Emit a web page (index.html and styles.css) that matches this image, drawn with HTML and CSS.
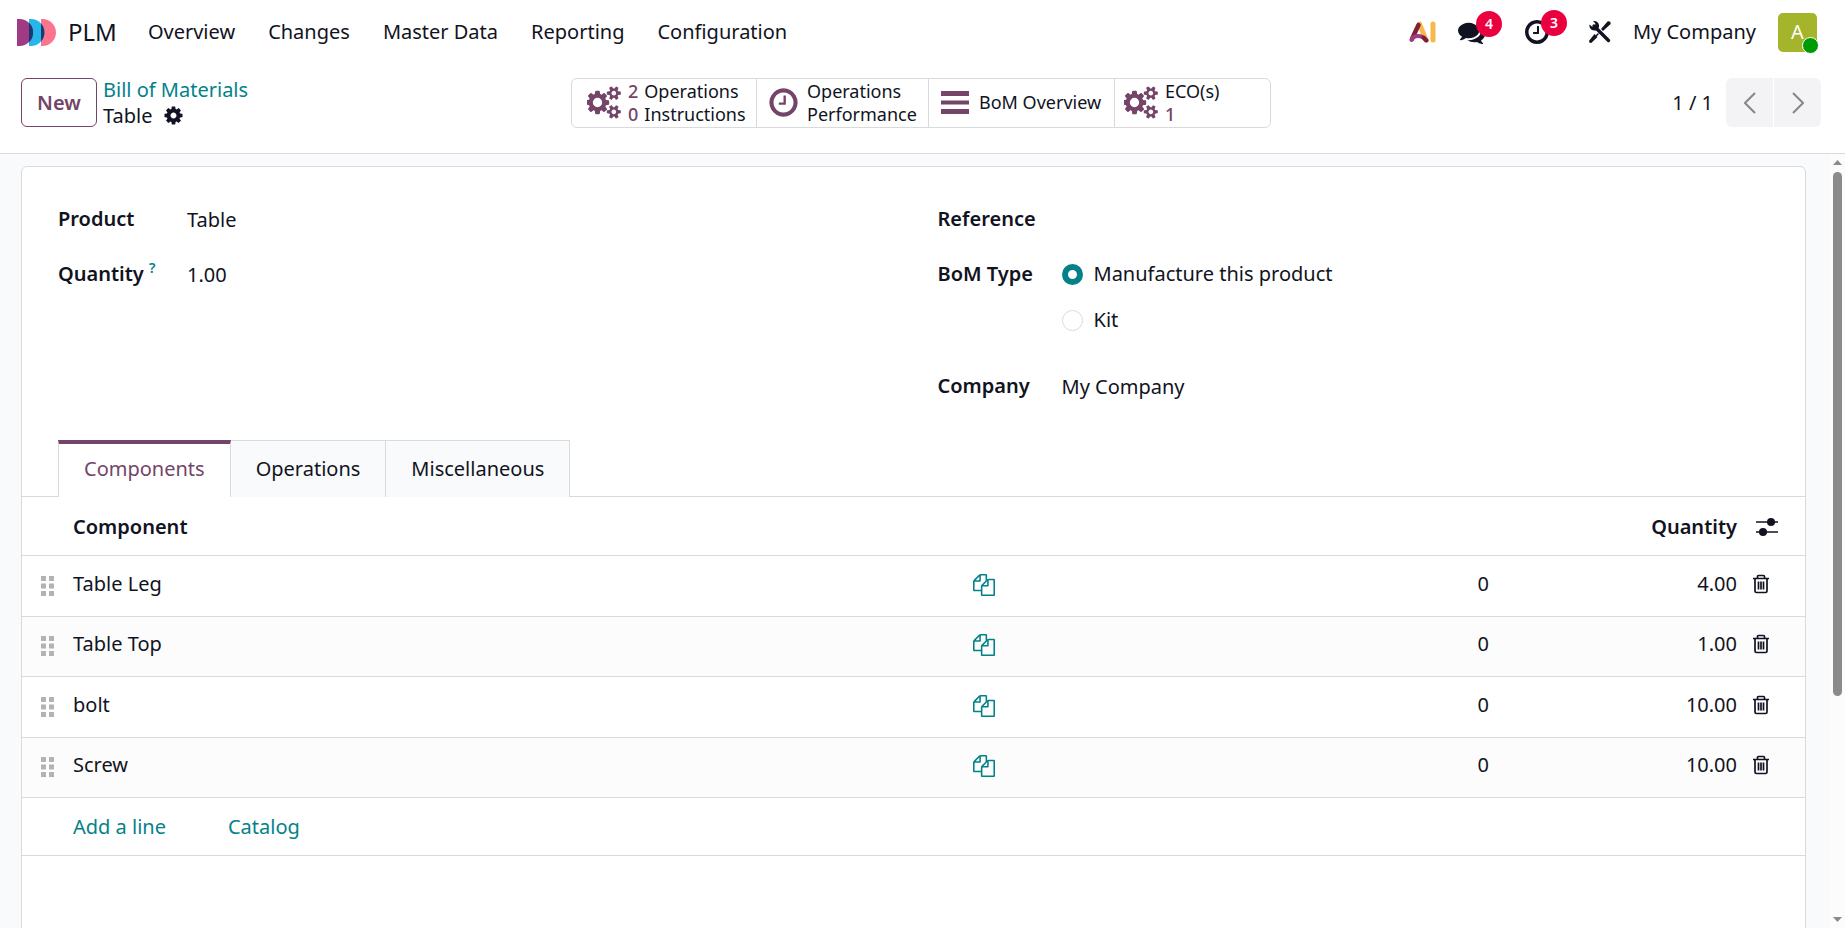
FILE: index.html
```html
<!DOCTYPE html>
<html lang="en">
<head>
    <meta charset="UTF-8">
    <meta name="viewport" content="width=device-width, initial-scale=1.0">
    <title>Table - Bill of Materials</title>
    <link rel="stylesheet" href="styles.css">
</head>
<body>

<!-- Shared icons -->
<svg class="sprite" aria-hidden="true">
    <symbol id="i-cog" viewBox="0 0 1792 1792"><path d="M1152 896q0-106-75-181t-181-75-181 75-75 181 75 181 181 75 181-75 75-181zm512-109v222q0 12-8 23t-20 13l-185 28q-19 54-39 91 35 50 107 138 10 12 10 25t-9 23q-27 37-99 108t-94 71q-12 0-26-9l-138-108q-44 23-91 38-16 136-29 186-7 28-36 28h-222q-14 0-24.5-8.5t-11.5-21.5l-28-184q-49-16-90-37l-141 107q-10 9-25 9-14 0-25-11-126-114-165-168-7-10-7-23 0-12 8-23 15-21 51-66.5t54-70.5q-27-50-41-99l-183-27q-13-2-21-12.5t-8-23.5v-222q0-12 8-23t19-13l186-28q14-46 39-92-40-57-107-138-10-12-10-24 0-10 9-23 26-36 98.5-107.5t94.5-71.5q13 0 26 10l138 107q44-23 91-38 16-136 29-186 7-28 36-28h222q14 0 24.5 8.5t11.5 21.5l28 184q49 16 90 37l142-107q9-9 24-9 13 0 25 10 129 119 165 170 7 8 7 22 0 12-8 23-15 21-51 66.5t-54 70.5q26 50 41 98l183 28q13 2 21 12.5t8 23.5z"/></symbol>
    <symbol id="i-cogs" viewBox="0 0 1920 1792"><path d="M832 896q0-106-75-181t-181-75-181 75-75 181 75 181 181 75 181-75 75-181zm768 512q0-52-38-90t-90-38-90 38-38 90q0 53 37.5 90.5t90.5 37.5 90.5-37.5 37.5-90.5zm0-1024q0-52-38-90t-90-38-90 38-38 90q0 53 37.5 90.5t90.5 37.5 90.5-37.5 37.5-90.5zm-384 421v185q0 10-7 19.5t-16 10.5l-155 24q-11 35-32 76 34 48 90 115 7 11 7 20 0 12-7 19-23 30-82.5 89.5t-78.5 59.5q-11 0-21-7l-115-90q-37 19-77 31-11 108-23 155-7 24-30 24h-186q-11 0-20-7.5t-10-17.5l-23-153q-34-10-75-31l-118 89q-7 7-20 7-11 0-21-8-144-133-144-160 0-9 7-19 10-14 41-53t47-61q-23-44-35-82l-152-24q-10-1-17-9.5t-7-19.5v-185q0-10 7-19.5t16-10.5l155-24q11-35 32-76-34-48-90-115-7-11-7-20 0-12 7-20 22-30 82-89t79-59q11 0 21 7l115 90q34-18 77-32 11-108 23-154 7-24 30-24h186q11 0 20 7.5t10 17.5l23 153q34 10 75 31l118-89q8-7 20-7 11 0 21 8 144 133 144 160 0 8-7 19-12 16-42 54t-45 60q23 48 34 82l152 23q10 2 17 10.5t7 19.5zm640 533v140q0 16-149 31-12 27-30 52 51 113 51 138 0 4-4 7-122 71-124 71-8 0-46-47t-52-68q-20 2-30 2t-30-2q-14 21-52 68t-46 47q-2 0-124-71-4-3-4-7 0-25 51-138-18-25-30-52-149-15-149-31v-140q0-16 149-31 13-29 30-52-51-113-51-138 0-4 4-7 4-2 35-20t59-34 30-16q8 0 46 46.5t52 67.5q20-2 30-2t30 2q51-71 92-112l6-2q4 0 124 70 4 3 4 7 0 25-51 138 17 23 30 52 149 15 149 31zm0-1024v140q0 16-149 31-12 27-30 52 51 113 51 138 0 4-4 7-122 71-124 71-8 0-46-47t-52-68q-20 2-30 2t-30-2q-14 21-52 68t-46 47q-2 0-124-71-4-3-4-7 0-25 51-138-18-25-30-52-149-15-149-31v-140q0-16 149-31 13-29 30-52-51-113-51-138 0-4 4-7 4-2 35-20t59-34 30-16q8 0 46 46.5t52 67.5q20-2 30-2t30 2q51-71 92-112l6-2q4 0 124 70 4 3 4 7 0 25-51 138 17 23 30 52 149 15 149 31z"/></symbol>
    <symbol id="i-clock" viewBox="0 0 1792 1792"><path d="M1024 544v448q0 14-9 23t-23 9h-320q-14 0-23-9t-9-23v-64q0-14 9-23t23-9h224v-352q0-14 9-23t23-9h64q14 0 23 9t9 23zm416 352q0-148-73-273t-198-198-273-73-273 73-198 198-73 273 73 273 198 198 273 73 273-73 198-198 73-273zm224 0q0 209-103 385.5t-279.5 279.5-385.5 103-385.5-103-279.5-279.5-103-385.5 103-385.5 279.5-279.5 385.5-103 385.5 103 279.5 279.5 103 385.5z"/></symbol>
    <symbol id="i-comments" viewBox="0 0 1792 1792"><path d="M1408 768q0 139-94 257t-256.5 186.5-353.5 68.5q-86 0-176-16-124 88-278 128-36 9-86 16h-3q-11 0-20.5-8t-11.5-21q-1-3-1-6.5t.5-6.5 2-6l2.5-5 3.5-5.5 4-5 4.5-5 4-4.500q5-6 23-25t26-29.5 22.5-29 25-38.5 20.5-44q-124-72-195-177t-71-224q0-139 94-257t256.5-186.5 353.5-68.5 353.5 68.5 256.5 186.5 94 257zm384 256q0 120-71 224.5t-195 176.5q10 24 20.5 44t25 38.5 22.5 29 26 29.5 23 25q1 1 4 4.500t4.500 5 4 5 3.500 5.500l2.500 5 2 6 .5 6.500-1 6.500q-3 14-13 22t-22 7q-50-7-86-16-154-40-278-128-90 16-176 16-271 0-472-132 58 4 88 4 161 0 309-45t264-129q125-92 192-212t67-254q0-77-23-152 129 71 204 178t75 230z"/></symbol>
    <symbol id="i-copy" viewBox="0 0 1792 1792"><path d="M1696 384q40 0 68 28t28 68v1216q0 40-28 68t-68 28h-960q-40 0-68-28t-28-68v-288h-544q-40 0-68-28t-28-68v-672q0-40 20-88t48-76l408-408q28-28 76-48t88-20h416q40 0 68 28t28 68v328q68-40 128-40h416zm-544 213l-299 299h299v-299zm-640-384l-299 299h299v-299zm196 647l316-316v-416h-384v416q0 40-28 68t-68 28h-416v640h512v-256q0-40 20-88t48-76zm956 804v-1152h-384v416q0 40-28 68t-68 28h-416v640h896z"/></symbol>
    <symbol id="i-trash" viewBox="0 0 18 20"><path d="M1 4.500h16M5.500 4V2.500q0-1 1-1h5q1 0 1 1V4M3 5v12q0 1.500 1.500 1.500h9q1.500 0 1.500-1.500V5M6.500 7.500v8M9 7.500v8M11.500 7.500v8" fill="none" stroke="currentColor" stroke-width="1.700"/></symbol>
    <symbol id="i-handle" viewBox="0 0 13 20"><path d="M0 0h5v5H0zM8 0h5v5H8zM0 7.500h5v5H0zM8 7.500h5v5H8zM0 15h5v5H0zM8 15h5v5H8z"/></symbol>
</svg>

<header class="navbar">
    <a class="brand" href="#">
        <svg width="39" height="27" viewBox="0 0 39 27" aria-hidden="true">
            <path d="M24 0h1.500a13.500 13.500 0 0 1 0 27H24z" fill="#fc748d"/>
            <path d="M12 0h2a13.500 13.500 0 0 1 0 27h-2z" fill="#27b5ea"/>
            <path d="M0 0h2.500a13.500 13.500 0 0 1 0 27H0z" fill="#a13a84"/>
            <path d="M12 3.800a13.500 13.500 0 0 1 0 19.400zM24 4.500a13.500 13.500 0 0 1 0 18z" fill="#1d3770"/>
        </svg>
        <span>PLM</span>
    </a>
    <nav class="menu">
        <a href="#">Overview</a>
        <a href="#">Changes</a>
        <a href="#">Master Data</a>
        <a href="#">Reporting</a>
        <a href="#">Configuration</a>
    </nav>
    <div class="systray">
        <button class="tray-btn" aria-label="AI">
            <svg width="27" height="22" viewBox="0 0 27 22" fill="none" stroke-linecap="round" aria-hidden="true">
                <path d="M10.500 3L17 19" stroke="#f7b84b" stroke-width="5"/>
                <path d="M9.500 4L3 18" stroke="#7d2038" stroke-width="4.500"/>
                <path d="M2.500 19Q4 15 9 15t7.500 4" fill="none" stroke="#a13a84" stroke-width="4"/>
                <path d="M14.500 16.500l3 3" stroke="#7d2038" stroke-width="4"/>
                <path d="M24 3v16" stroke="#f7b84b" stroke-width="5"/>
            </svg>
        </button>
        <button class="tray-btn" aria-label="Messages">
            <svg width="27" height="27" aria-hidden="true"><use href="#i-comments"/></svg>
            <span class="badge">4</span>
        </button>
        <button class="tray-btn" aria-label="Activities">
            <svg width="28" height="28" aria-hidden="true"><use href="#i-clock"/></svg>
            <span class="badge">3</span>
        </button>
        <button class="tray-btn tools" aria-label="Developer tools">
            <svg width="22" height="22" viewBox="0 0 22 22" aria-hidden="true">
                <path d="M5 5l14.500 14.500" stroke="currentColor" stroke-width="3.400" stroke-linecap="round"/>
                <path d="M4 0q5-.5 6 4 .2 1.500-.3 2.700L7 9.500Q2 10 .8 6.500.2 5 .5 3.500L3.500 6 6 5l.4-2.500z"/>
                <path d="M12 8l6.500-7.500q1.500-.8 2.500.2 1.200 1 .4 2.500L14 10z"/>
                <path d="M9.500 12.500L7 15" stroke="currentColor" stroke-width="1.500"/>
                <path d="M5.500 13l3 3L2.500 21.700q-1.200.5-2-.3-.8-.8-.2-2z"/>
            </svg>
        </button>
        <button class="company">My Company</button>
        <button class="avatar" aria-label="User menu">A<span class="status"></span></button>
    </div>
</header>

<section class="control-panel">
    <div class="cp-left">
        <button class="btn-new">New</button>
        <div class="breadcrumb">
            <a href="#">Bill of Materials</a>
            <div class="current">Table <svg width="21" height="21" aria-hidden="true"><use href="#i-cog"/></svg></div>
        </div>
    </div>
    <div class="stat-buttons">
        <button class="stat stat-ops">
            <svg width="35" height="33" aria-hidden="true"><use href="#i-cogs"/></svg>
            <span class="stat-lines">
                <span><b>2</b>Operations</span>
                <span><b>0</b>Instructions</span>
            </span>
        </button>
        <button class="stat stat-perf">
            <svg width="33" height="33" aria-hidden="true"><use href="#i-clock"/></svg>
            <span class="stat-lines"><span>Operations</span><span>Performance</span></span>
        </button>
        <button class="stat stat-bom">
            <svg width="28" height="24" viewBox="0 0 28 24" aria-hidden="true"><path d="M0 0h28v5H0zM0 9.500h28v4H0zM0 18h28v5H0z"/></svg>
            <span>BoM Overview</span>
        </button>
        <button class="stat stat-eco">
            <svg width="35" height="33" aria-hidden="true"><use href="#i-cogs"/></svg>
            <span class="stat-lines"><span>ECO(s)</span><span class="count">1</span></span>
        </button>
    </div>
    <div class="pager">
        <span>1 / 1</span>
        <div class="pager-buttons">
            <button aria-label="Previous"><svg width="12" height="22" viewBox="0 0 12 22"><path d="M11 1L1 11l10 10"/></svg></button>
            <button aria-label="Next"><svg width="12" height="22" viewBox="0 0 12 22"><path d="M1 1l10 10L1 21"/></svg></button>
        </div>
    </div>
</section>

<div class="view">
    <main class="content">
        <div class="sheet">
            <div class="fields">
                <div class="group group-left">
                    <span class="label">Product</span>
                    <span class="value">Table</span>
                    <span class="label">Quantity <sup>?</sup></span>
                    <span class="value">1.00</span>
                </div>
                <div class="group group-right">
                    <span class="label">Reference</span>
                    <span class="value">&nbsp;</span>
                    <span class="label" id="bom-type">BoM Type</span>
                    <div class="radios" role="radiogroup" aria-labelledby="bom-type">
                        <label><input type="radio" name="type" checked>Manufacture this product</label>
                        <label><input type="radio" name="type">Kit</label>
                    </div>
                    <span class="label">Company</span>
                    <span class="value">My Company</span>
                </div>
            </div>

            <div class="tabs" role="tablist">
                <button class="tab active" role="tab" aria-selected="true">Components</button>
                <button class="tab" role="tab">Operations</button>
                <button class="tab" role="tab">Miscellaneous</button>
            </div>

            <table class="lines">
                <colgroup>
                    <col class="c-handle">
                    <col class="c-name">
                    <col class="c-copy">
                    <col class="c-eco">
                    <col class="c-qty">
                    <col class="c-action">
                </colgroup>
                <thead>
                    <tr>
                        <th></th>
                        <th>Component</th>
                        <th></th>
                        <th></th>
                        <th class="num">Quantity</th>
                        <th>
                            <button class="icon-btn optional" aria-label="Optional columns">
                                <svg width="22" height="18" viewBox="0 0 22 18"><path d="M0 4h22M0 14h22" stroke="currentColor" stroke-width="1.600"/><circle cx="15" cy="4" r="4"/><circle cx="7" cy="14" r="4"/></svg>
                            </button>
                        </th>
                    </tr>
                </thead>
                <tbody>
                    <tr>
                        <td class="handle"><svg width="13" height="20"><use href="#i-handle"/></svg></td>
                        <td>Table Leg</td>
                        <td class="copy"><button class="icon-btn" aria-label="Show BoM"><svg width="22" height="22"><use href="#i-copy"/></svg></button></td>
                        <td class="num">0</td>
                        <td class="num">4.00</td>
                        <td><button class="icon-btn" aria-label="Delete row"><svg width="18" height="20"><use href="#i-trash"/></svg></button></td>
                    </tr>
                    <tr>
                        <td class="handle"><svg width="13" height="20"><use href="#i-handle"/></svg></td>
                        <td>Table Top</td>
                        <td class="copy"><button class="icon-btn" aria-label="Show BoM"><svg width="22" height="22"><use href="#i-copy"/></svg></button></td>
                        <td class="num">0</td>
                        <td class="num">1.00</td>
                        <td><button class="icon-btn" aria-label="Delete row"><svg width="18" height="20"><use href="#i-trash"/></svg></button></td>
                    </tr>
                    <tr>
                        <td class="handle"><svg width="13" height="20"><use href="#i-handle"/></svg></td>
                        <td>bolt</td>
                        <td class="copy"><button class="icon-btn" aria-label="Show BoM"><svg width="22" height="22"><use href="#i-copy"/></svg></button></td>
                        <td class="num">0</td>
                        <td class="num">10.00</td>
                        <td><button class="icon-btn" aria-label="Delete row"><svg width="18" height="20"><use href="#i-trash"/></svg></button></td>
                    </tr>
                    <tr>
                        <td class="handle"><svg width="13" height="20"><use href="#i-handle"/></svg></td>
                        <td>Screw</td>
                        <td class="copy"><button class="icon-btn" aria-label="Show BoM"><svg width="22" height="22"><use href="#i-copy"/></svg></button></td>
                        <td class="num">0</td>
                        <td class="num">10.00</td>
                        <td><button class="icon-btn" aria-label="Delete row"><svg width="18" height="20"><use href="#i-trash"/></svg></button></td>
                    </tr>
                </tbody>
            </table>
            <div class="add-line">
                <a href="#">Add a line</a>
                <a href="#">Catalog</a>
            </div>
        </div>
    </main>
    <div class="scrollbar" aria-hidden="true">
        <svg width="9" height="5" viewBox="0 0 9 5"><path d="M0 5l4.500-5L9 5z"/></svg>
        <div class="track"><div class="thumb"></div></div>
        <svg width="9" height="5" viewBox="0 0 9 5"><path d="M0 0l4.500 5L9 0z"/></svg>
    </div>
</div>

</body>
</html>
```
FILE: styles.css
```css
* {
    box-sizing: border-box;
}
body {
    display: flex;
    flex-direction: column;
    height: 100vh;
    margin: 0;
    background-color: #ffffff;
    color: #111322;
    font-family: "Noto Sans", sans-serif;
    font-size: 20px;
    line-height: 26px;
}
button {
    padding: 0;
    border: none;
    background: none;
    color: inherit;
    font: inherit;
    cursor: pointer;
}
a {
    color: #028288;
    text-decoration: none;
}
svg {
    display: block;
    flex-shrink: 0;
    fill: currentColor;
}
.sprite {
    position: absolute;
    width: 0;
    height: 0;
}

/* Top bar */
.navbar {
    display: flex;
    align-items: center;
    height: 64px;
    padding: 0 28px 0 17px;
}
.brand {
    display: flex;
    align-items: center;
    gap: 12px;
    margin-right: 31px;
    color: #111322;
    font-size: 24px;
}
.menu {
    display: flex;
    gap: 33px;
}
.menu a {
    color: #111322;
}
.systray {
    display: flex;
    align-items: center;
    margin-left: auto;
}
.tray-btn {
    position: relative;
    margin-right: 22px;
}
.tray-btn + .tray-btn {
    margin-right: 38px;
}
.tray-btn + .tools {
    margin-right: 22px;
}
.badge {
    position: absolute;
    top: -8px;
    left: 18px;
    width: 26px;
    height: 26px;
    border-radius: 50%;
    background-color: #eb003f;
    color: #ffffff;
    font-size: 14px;
    font-weight: 600;
    line-height: 25px;
}
.company {
    margin-right: 22px;
}
.avatar {
    position: relative;
    width: 39px;
    height: 39px;
    border-radius: 5px;
    background-color: #a5b52b;
    color: #ffffff;
}
.status {
    position: absolute;
    right: -2px;
    bottom: -2px;
    width: 17px;
    height: 17px;
    border: 1px solid #ffffff;
    border-radius: 50%;
    background-color: #009a06;
}

/* Breadcrumb, stat buttons and pager */
.control-panel {
    display: grid;
    grid-template-columns: 1fr auto 1fr;
    align-items: center;
    height: 90px;
    padding: 0 24px 12px 21px;
    border-bottom: 1px solid #d8dadd;
}
.cp-left {
    display: flex;
    align-items: center;
    gap: 6px;
}
.btn-new {
    width: 76px;
    height: 49px;
    border: 1px solid #744469;
    border-radius: 6px;
    color: #744469;
    font-weight: 600;
}
.current {
    display: flex;
    align-items: center;
    gap: 11px;
}
.stat-buttons {
    display: flex;
    border: 1px solid #d8dadd;
    border-radius: 6px;
    font-size: 18px;
    line-height: 23px;
}
.stat {
    display: flex;
    align-items: center;
    height: 48px;
    text-align: left;
    white-space: nowrap;
}
.stat + .stat {
    border-left: 1px solid #d8dadd;
}
.stat svg {
    color: #744469;
}
.stat b,
.count {
    color: #744469;
    font-weight: 500;
}
.stat b {
    margin-right: 6px;
}
.stat-lines {
    display: flex;
    flex-direction: column;
}
.stat-ops {
    gap: 6px;
    width: 184px;
    padding-left: 15px;
}
.stat-perf {
    gap: 7px;
    width: 172px;
    padding-left: 10px;
}
.stat-bom {
    gap: 10px;
    width: 186px;
    padding-left: 12px;
}
.stat-eco {
    gap: 6px;
    width: 156px;
    padding-left: 9px;
}
.pager {
    display: flex;
    align-items: center;
    justify-content: flex-end;
    gap: 13px;
}
.pager-buttons {
    display: flex;
    gap: 1px;
    overflow: hidden;
    border-radius: 6px;
}
.pager-buttons button {
    display: flex;
    align-items: center;
    justify-content: center;
    width: 47px;
    height: 49px;
    background-color: #f3f3f6;
}
.pager-buttons svg {
    fill: none;
    stroke: #87878b;
    stroke-width: 2;
}

/* Scrolling area */
.view {
    display: flex;
    flex: 1;
    min-height: 0;
}
.content {
    flex: 1;
    overflow-y: auto;
    padding: 12px 24px 24px 21px;
    background-color: #f9fafb;
    scrollbar-width: none;
}
.scrollbar {
    display: flex;
    flex-direction: column;
    align-items: center;
    gap: 7px;
    width: 15px;
    padding: 6px 0;
    background-color: #fcfcfc;
    color: #8b8b8b;
}
.track {
    flex: 1;
}
.thumb {
    width: 9px;
    height: 71%;
    border-radius: 5px;
    background-color: #8b8b8b;
}
.sheet {
    min-height: 1060px;
    border: 1px solid #d8dadd;
    border-radius: 6px;
    background-color: #ffffff;
}
.fields {
    display: grid;
    grid-template-columns: 1fr 1fr;
    padding: 39px 36px 0;
    min-height: 273px;
}
.group {
    display: grid;
    align-content: start;
    row-gap: 28px;
}
.group-left {
    grid-template-columns: 129px 1fr;
}
.group-right {
    grid-template-columns: 124px 1fr;
    padding-left: 24px;
}
.label {
    font-weight: 600;
}
.label sup {
    color: #028288;
    font-size: 14px;
    line-height: 0;
}
.value {
    padding-top: 1px;
}
.radios {
    display: flex;
    flex-direction: column;
    gap: 20px;
    padding-bottom: 12px;
}
.radios label {
    display: flex;
    align-items: center;
    gap: 11px;
}
.radios input {
    appearance: none;
    width: 21px;
    height: 21px;
    margin: 0;
    border: 1px solid #d8dadd;
    border-radius: 50%;
    background-color: #ffffff;
}
.radios input:checked {
    border: 6px solid #028288;
}

/* Notebook */
.tabs {
    display: flex;
    padding-left: 36px;
    border-bottom: 1px solid #d8dadd;
}
.tab {
    height: 57px;
    margin-bottom: -1px;
    padding: 0 25px;
    border: 1px solid #d8dadd;
    border-bottom: none;
    border-left: none;
    background-color: #f9fafb;
}
.tab.active {
    padding: 0 25px 3px;
    border-top: 4px solid #744469;
    border-left: 1px solid #d8dadd;
    background-color: #ffffff;
    color: #744469;
}
.lines {
    width: 100%;
    border-collapse: collapse;
    table-layout: fixed;
}
.lines th,
.lines td {
    height: 60px;
    padding: 0;
    border-bottom: 1px solid #d8dadd;
    text-align: left;
}
.lines th {
    height: 58px;
    padding-top: 2px;
    font-weight: 600;
}
.lines td {
    padding-bottom: 4px;
}
.lines tbody tr:nth-child(odd) td {
    height: 61px;
}
.lines tbody tr:nth-child(even) {
    background-color: #fcfcfc;
}
.lines .num {
    text-align: right;
}
.lines .handle {
    padding: 0 0 0 19px;
    color: #b3b3b3;
}
.lines .copy {
    padding-bottom: 2px;
    color: #028288;
}
.c-handle {
    width: 51px;
}
.c-copy {
    width: 249px;
}
.c-eco {
    width: 267px;
}
.c-qty {
    width: 248px;
}
.c-action {
    width: 68px;
}
.icon-btn {
    display: block;
    margin-left: 15px;
}
.copy .icon-btn {
    margin-left: 0;
}
.icon-btn.optional {
    margin-left: 19px;
}
.add-line {
    display: flex;
    gap: 62px;
    padding: 16px 51px 15px;
    border-bottom: 1px solid #d8dadd;
}
```
